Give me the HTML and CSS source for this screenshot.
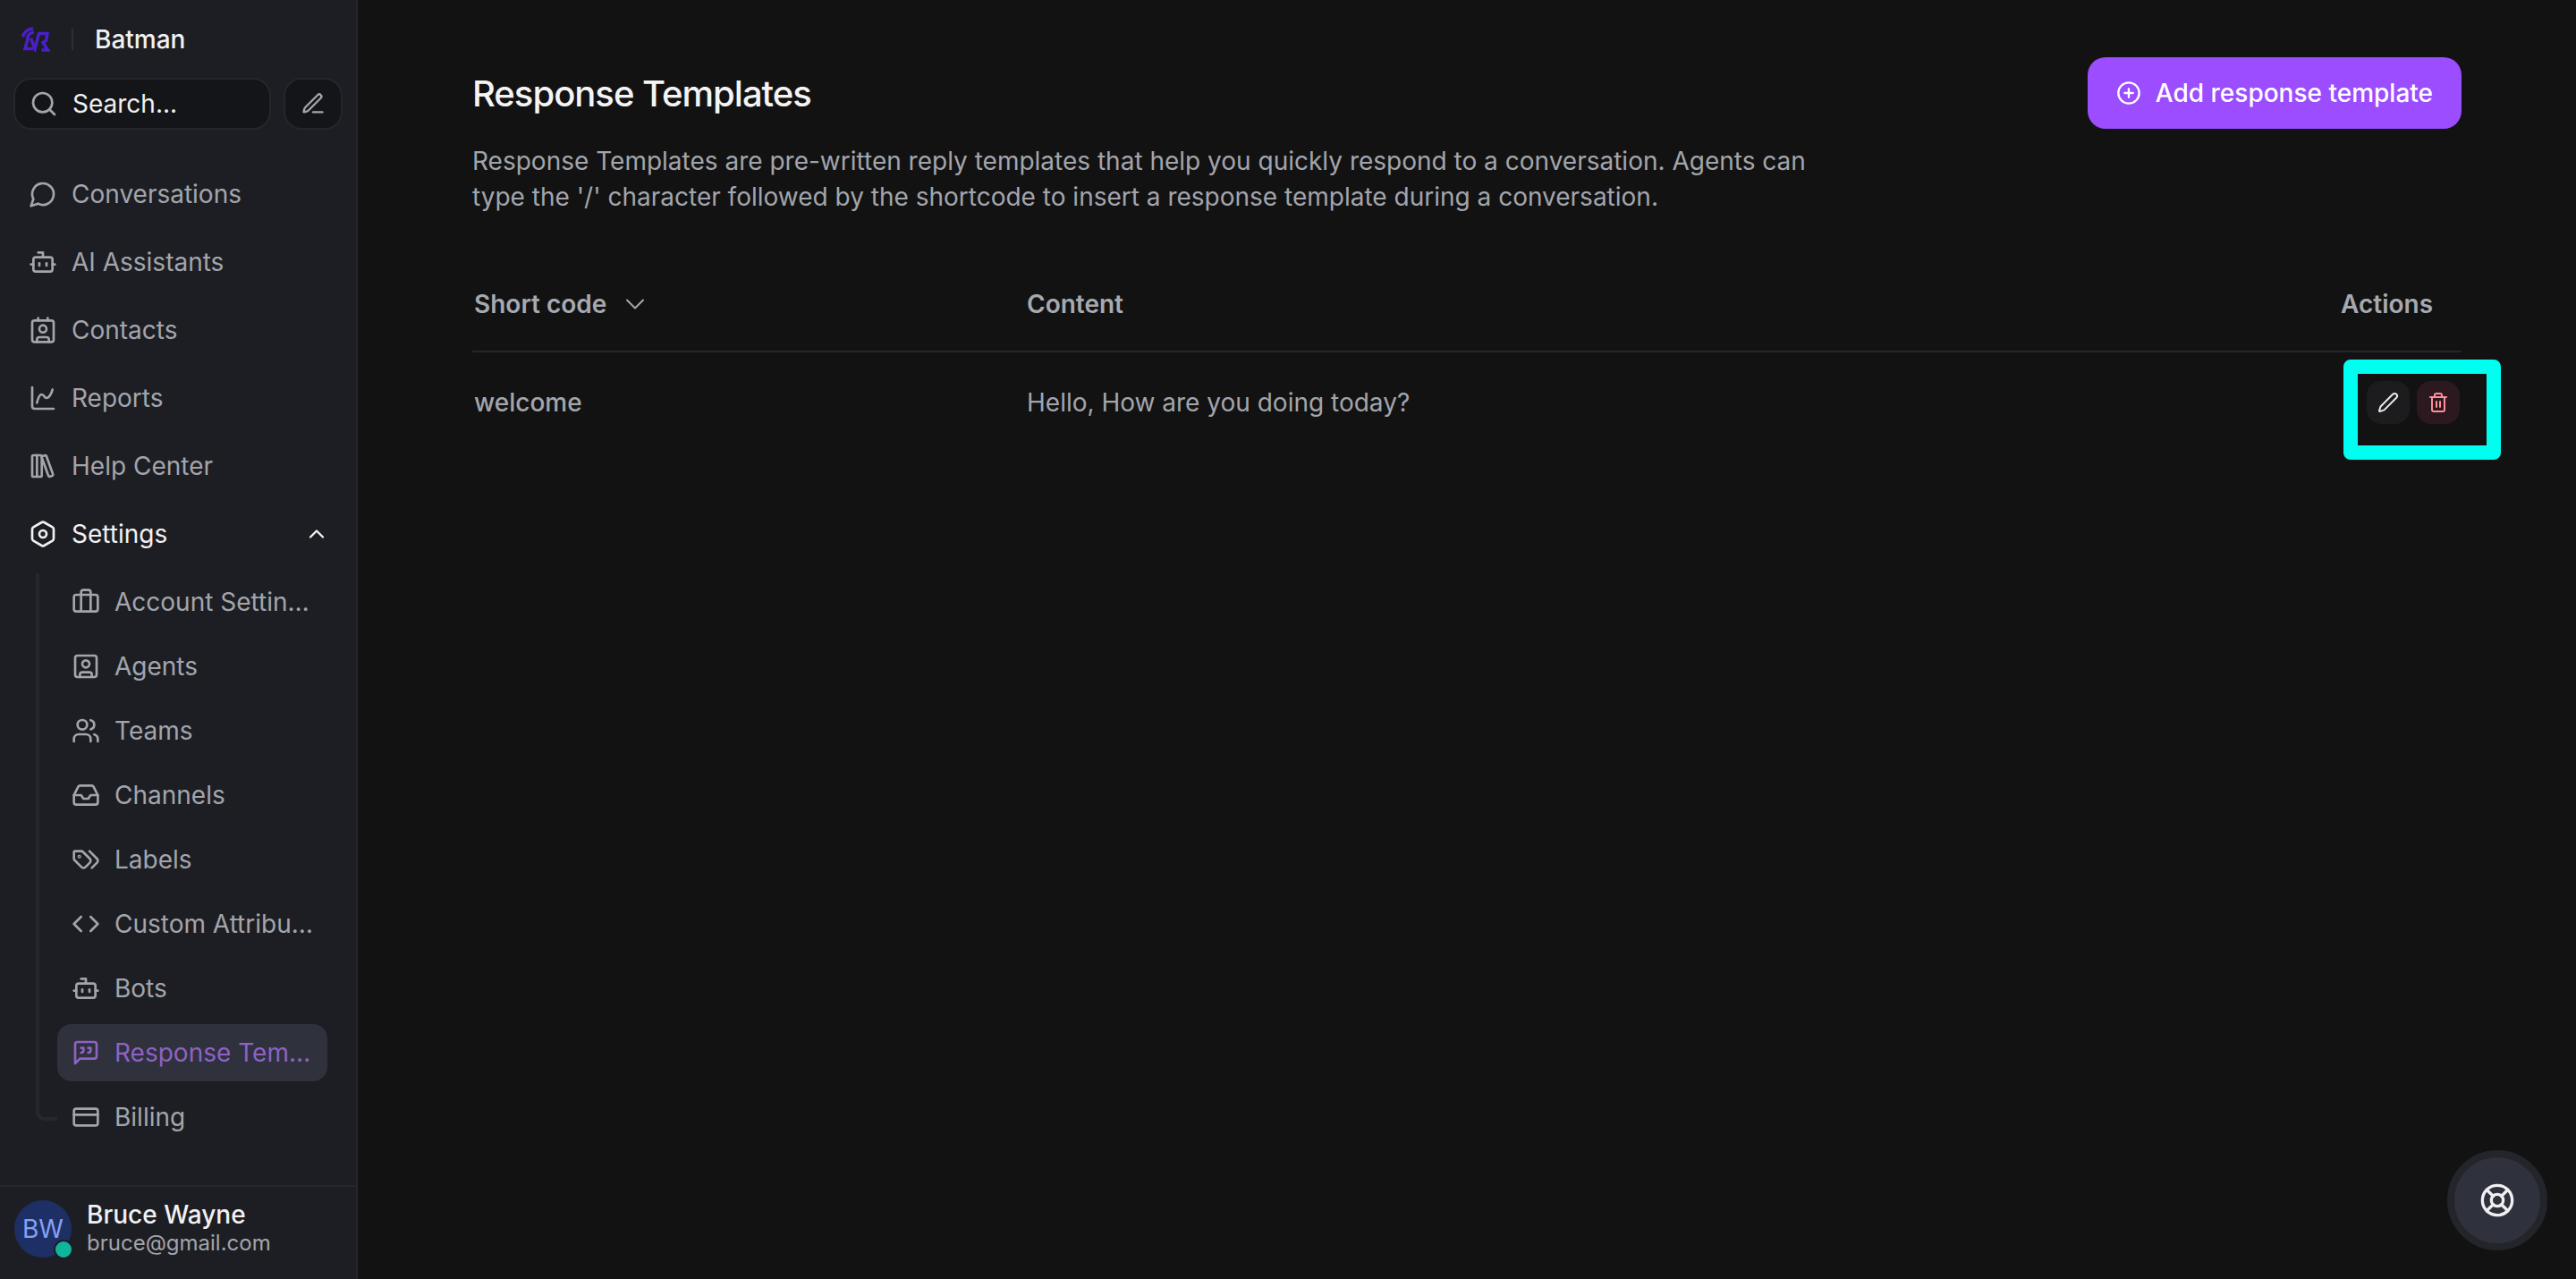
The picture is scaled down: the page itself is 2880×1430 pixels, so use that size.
FILE: index.html
```html
<!DOCTYPE html>
<html lang="en">
<head>
    <meta charset="UTF-8">
    <meta name="viewport" content="width=device-width, initial-scale=1.0">
    <title>Response Templates</title>
    <link rel="stylesheet" href="styles.css">
</head>
<body>
    <!-- Sidebar -->
    <aside class="sidebar">
        <div class="brand">
            <svg class="logo" viewBox="0 0 32 28">
                <path d="M1 11C3 6 7 2.500 13 2"/>
                <path d="M6 12C7.500 9 10 6.500 14 6"/>
                <path d="M7.700 11L4 24.500H13"/>
                <path d="M10.500 13L15 24.500L19.500 7.500H29L27.500 15.500L24 17.500L29.500 26H22.500"/>
            </svg>
            <span class="brand-divider"></span>
            <span class="brand-name">Batman</span>
        </div>
        <div class="search-row">
            <div class="search-box">
                <svg class="icon" viewBox="0 0 24 24"><circle cx="11" cy="11" r="8"/><path d="m21 21-4.300-4.300"/></svg>
                <span>Search...</span>
            </div>
            <div class="compose-button">
                <svg class="icon" viewBox="0 0 24 24"><path d="M12 20h9"/><path d="M16.376 3.622a1 1 0 0 1 3.002 3.002L7.368 18.635a2 2 0 0 1-.855.506l-2.872.838a.5.5 0 0 1-.62-.62l.838-2.872a2 2 0 0 1 .506-.854z"/></svg>
            </div>
        </div>

        <nav class="nav">
            <div class="nav-item">
                <svg class="icon" viewBox="0 0 24 24"><path d="M7.900 20A9 9 0 1 0 4 16.100L2 22Z"/></svg>
                <span>Conversations</span>
            </div>
            <div class="nav-item">
                <svg class="icon" viewBox="0 0 24 24"><path d="M12 8V4H8"/><rect width="16" height="12" x="4" y="8" rx="2"/><path d="M2 14h2"/><path d="M20 14h2"/><path d="M15 13v2"/><path d="M9 13v2"/></svg>
                <span>AI Assistants</span>
            </div>
            <div class="nav-item">
                <svg class="icon" viewBox="0 0 24 24"><path d="M16 2v2"/><path d="M7 22v-2a2 2 0 0 1 2-2h6a2 2 0 0 1 2 2v2"/><path d="M8 2v2"/><circle cx="12" cy="11" r="3"/><rect x="3" y="4" width="18" height="18" rx="2"/></svg>
                <span>Contacts</span>
            </div>
            <div class="nav-item">
                <svg class="icon" viewBox="0 0 24 24"><path d="M3 3v16a2 2 0 0 0 2 2h16"/><path d="M7 16c.5-2 1.500-7 4-7 2 0 2 3 4 3 2.500 0 4.500-5 5-7"/></svg>
                <span>Reports</span>
            </div>
            <div class="nav-item">
                <svg class="icon" viewBox="0 0 24 24"><rect width="8" height="18" x="3" y="3" rx="1"/><path d="M7 3v18"/><path d="M20.400 18.900c.2.5-.1 1.100-.6 1.300l-1.900.7c-.5.2-1.100-.1-1.300-.6L11.100 5.100c-.2-.5.1-1.100.6-1.300l1.900-.7c.5-.2 1.100.1 1.300.6Z"/></svg>
                <span>Help Center</span>
            </div>
            <div class="nav-item nav-item-open">
                <svg class="icon" viewBox="0 0 24 24"><path d="M21 16V8a2 2 0 0 0-1-1.730l-7-4a2 2 0 0 0-2 0l-7 4A2 2 0 0 0 3 8v8a2 2 0 0 0 1 1.730l7 4a2 2 0 0 0 2 0l7-4A2 2 0 0 0 21 16z"/><circle cx="12" cy="12" r="3"/></svg>
                <span>Settings</span>
                <svg class="icon-chevron" viewBox="0 0 24 24"><path d="m18 15-6-6-6 6"/></svg>
            </div>

            <div class="subnav">
                <div class="subnav-item">
                    <svg class="icon" viewBox="0 0 24 24"><path d="M16 20V4a2 2 0 0 0-2-2h-4a2 2 0 0 0-2 2v16"/><rect width="20" height="14" x="2" y="6" rx="2"/></svg>
                    <span class="subnav-label">Account Settings</span>
                </div>
                <div class="subnav-item">
                    <svg class="icon" viewBox="0 0 24 24"><rect width="18" height="18" x="3" y="3" rx="2"/><circle cx="12" cy="10" r="3"/><path d="M7 21v-2a2 2 0 0 1 2-2h6a2 2 0 0 1 2 2v2"/></svg>
                    <span class="subnav-label">Agents</span>
                </div>
                <div class="subnav-item">
                    <svg class="icon" viewBox="0 0 24 24"><path d="M16 21v-2a4 4 0 0 0-4-4H6a4 4 0 0 0-4 4v2"/><circle cx="9" cy="7" r="4"/><path d="M22 21v-2a4 4 0 0 0-3-3.870"/><path d="M16 3.130a4 4 0 0 1 0 7.750"/></svg>
                    <span class="subnav-label">Teams</span>
                </div>
                <div class="subnav-item">
                    <svg class="icon" viewBox="0 0 24 24"><path d="M22 12h-6l-2 3h-4l-2-3H2"/><path d="M5.450 5.110 2 12v6a2 2 0 0 0 2 2h16a2 2 0 0 0 2-2v-6l-3.450-6.890A2 2 0 0 0 16.760 4H7.240a2 2 0 0 0-1.790 1.110z"/></svg>
                    <span class="subnav-label">Channels</span>
                </div>
                <div class="subnav-item">
                    <svg class="icon" viewBox="0 0 24 24"><path d="m15 5 6.300 6.300a2.400 2.400 0 0 1 0 3.400L17 19"/><path d="M9.586 5.586A2 2 0 0 0 8.172 5H3a1 1 0 0 0-1 1v5.172a2 2 0 0 0 .586 1.414L8.290 18.290a2.426 2.426 0 0 0 3.420 0l3.580-3.580a2.426 2.426 0 0 0 0-3.420z"/><circle cx="6.500" cy="9.500" r=".5"/></svg>
                    <span class="subnav-label">Labels</span>
                </div>
                <div class="subnav-item">
                    <svg class="icon" viewBox="0 0 24 24"><path d="m16 18 6-6-6-6"/><path d="m8 6-6 6 6 6"/></svg>
                    <span class="subnav-label">Custom Attributes</span>
                </div>
                <div class="subnav-item">
                    <svg class="icon" viewBox="0 0 24 24"><path d="M12 8V4H8"/><rect width="16" height="12" x="4" y="8" rx="2"/><path d="M2 14h2"/><path d="M20 14h2"/><path d="M15 13v2"/><path d="M9 13v2"/></svg>
                    <span class="subnav-label">Bots</span>
                </div>
                <div class="subnav-item subnav-item-active">
                    <svg class="icon" viewBox="0 0 24 24"><path d="M21 15a2 2 0 0 1-2 2H7l-4 4V5a2 2 0 0 1 2-2h14a2 2 0 0 1 2 2z"/><path d="M8 12a2 2 0 0 0 2-2V8H8"/><path d="M14 12a2 2 0 0 0 2-2V8h-2"/></svg>
                    <span class="subnav-label">Response Templates</span>
                </div>
                <div class="subnav-item">
                    <svg class="icon" viewBox="0 0 24 24"><rect width="20" height="14" x="2" y="5" rx="2"/><path d="M2 10h20"/></svg>
                    <span class="subnav-label">Billing</span>
                </div>
            </div>
        </nav>

        <div class="profile">
            <div class="avatar">BW<span class="status-dot"></span></div>
            <div class="profile-text">
                <div class="profile-name">Bruce Wayne</div>
                <div class="profile-email">bruce@gmail.com</div>
            </div>
        </div>
    </aside>

    <!-- Main -->
    <main class="main">
        <div class="page-header">
            <h1>Response Templates</h1>
            <div class="add-button">
                <svg class="icon" viewBox="0 0 24 24"><circle cx="12" cy="12" r="10"/><path d="M8 12h8"/><path d="M12 8v8"/></svg>
                <span>Add response template</span>
            </div>
        </div>
        <p class="page-description">Response Templates are pre-written reply templates that help you quickly respond to a conversation. Agents can type the '/' character followed by the shortcode to insert a response template during a conversation.</p>

        <table class="templates">
            <thead>
                <tr>
                    <th class="col-code">
                        <span class="sort-head">Short code
                            <svg class="icon-sort" viewBox="0 0 24 24"><path d="m6 9 6 6 6-6"/></svg>
                        </span>
                    </th>
                    <th>Content</th>
                    <th class="col-actions">Actions</th>
                </tr>
            </thead>
            <tbody>
                <tr>
                    <td class="cell-code">welcome</td>
                    <td>Hello, How are you doing today?</td>
                    <td class="cell-actions">
                        <div class="actions">
                            <div class="action-button">
                                <svg class="icon-small" viewBox="0 0 24 24"><path d="M21.174 6.812a1 1 0 0 0-3.986-3.987L3.842 16.174a2 2 0 0 0-.5.83l-1.321 4.352a.5.5 0 0 0 .623.622l4.353-1.320a2 2 0 0 0 .83-.497z"/></svg>
                            </div>
                            <div class="action-button action-delete">
                                <svg class="icon-small" viewBox="0 0 24 24"><path d="M3 6h18"/><path d="M19 6v14c0 1-1 2-2 2H7c-1 0-2-1-2-2V6"/><path d="M8 6V4c0-1 1-2 2-2h4c1 0 2 1 2 2v2"/><path d="M10 11v6"/><path d="M14 11v6"/></svg>
                            </div>
                            <div class="highlight-box"></div>
                        </div>
                    </td>
                </tr>
            </tbody>
        </table>

        <div class="help-button">
            <svg class="icon-help" viewBox="0 0 24 24"><circle cx="12" cy="12" r="10"/><path d="m4.930 4.930 4.240 4.240"/><path d="m14.830 9.170 4.240-4.240"/><path d="m14.830 14.830 4.240 4.240"/><path d="m9.170 14.830-4.240 4.240"/><circle cx="12" cy="12" r="4"/></svg>
        </div>
    </main>
</body>
</html>
```

FILE: styles.css
```css
* {
    box-sizing: border-box;
}

body {
    margin: 0;
    height: 100vh;
    display: flex;
    overflow: hidden;
    font-family: Inter, "Liberation Sans", sans-serif;
    font-size: 28px;
    color: #a3a5ac;
    background-color: #121212;
}

svg {
    flex-shrink: 0;
    fill: none;
    stroke: currentColor;
    stroke-width: 2;
    stroke-linecap: round;
    stroke-linejoin: round;
}

.icon {
    width: 32px;
    height: 32px;
}

/* Sidebar */
.sidebar {
    width: 400px;
    flex-shrink: 0;
    display: flex;
    flex-direction: column;
    background-color: #1d1e23;
    border-right: 2px solid #26272c;
}

.brand {
    height: 87px;
    display: flex;
    align-items: center;
    padding-left: 24px;
}

.logo {
    width: 32px;
    height: 28px;
    stroke: #4a1fc9;
    stroke-width: 3.500;
    stroke-linecap: butt;
    stroke-linejoin: miter;
}

.brand-divider {
    width: 2px;
    height: 24px;
    margin-left: 24px;
    margin-right: 24px;
    background-color: #2f3035;
}

.brand-name {
    font-weight: 500;
    color: #f1f1f3;
}

.search-row {
    display: flex;
    gap: 14px;
    padding: 0 15px;
}

.search-box {
    flex: 1;
    height: 58px;
    display: flex;
    align-items: center;
    gap: 16px;
    padding-left: 16px;
    color: #f0f0f2;
    background-color: #141519;
    border: 2px solid #25262b;
    border-radius: 20px;
}

.search-box .icon {
    color: #a3a5ac;
}

.compose-button {
    width: 66px;
    height: 58px;
    display: flex;
    justify-content: center;
    align-items: center;
    background-color: #141519;
    border: 2px solid #25262b;
    border-radius: 20px;
}

.compose-button .icon {
    width: 28px;
    height: 28px;
}

.nav {
    flex: 1;
    display: flex;
    flex-direction: column;
    gap: 8px;
    padding: 38px 16px 0;
}

.nav-item {
    height: 68px;
    display: flex;
    align-items: center;
    gap: 16px;
    padding: 0 16px;
}

.nav-item-open {
    color: #f1f1f3;
}

.icon-chevron {
    width: 28px;
    height: 28px;
    margin-left: auto;
    margin-right: -2px;
}

.subnav {
    position: relative;
    display: flex;
    flex-direction: column;
    gap: 8px;
    margin-top: 2px;
    padding-left: 48px;
    padding-right: 16px;
}

/* tree line on the left of the settings children */
.subnav::before {
    content: "";
    position: absolute;
    left: 24px;
    top: 0;
    bottom: 28px;
    width: 20px;
    border-left: 4px solid #27282d;
    border-bottom: 4px solid #27282d;
    border-bottom-left-radius: 10px;
}

.subnav-item {
    height: 64px;
    display: flex;
    align-items: center;
    gap: 16px;
    padding: 0 14px 0 16px;
    border-radius: 16px;
}

.subnav-label {
    min-width: 0;
    overflow: hidden;
    white-space: nowrap;
    text-overflow: ellipsis;
}

.subnav-item-active {
    color: #8f62c4;
    background-color: #2f313d;
}

.profile {
    height: 105px;
    display: flex;
    gap: 17px;
    padding: 15px 16px 0;
    border-top: 2px solid #26272c;
}

.avatar {
    position: relative;
    width: 64px;
    height: 64px;
    display: flex;
    justify-content: center;
    align-items: center;
    color: #86a1f3;
    background-color: #1e2f66;
    border-radius: 50%;
}

.status-dot {
    position: absolute;
    right: -2px;
    bottom: -2px;
    width: 22px;
    height: 22px;
    background-color: #10b69b;
    border: 2px solid #1d1e23;
    border-radius: 50%;
}

.profile-text {
    margin-top: -2px;
}

.profile-name {
    font-weight: 500;
    line-height: 36px;
    color: #f1f1f3;
}

.profile-email {
    font-size: 24px;
    line-height: 28px;
}

/* Main */
.main {
    flex: 1;
    position: relative;
    padding: 64px 128px 0;
}

.page-header {
    display: flex;
    justify-content: space-between;
    align-items: center;
}

h1 {
    margin: 0;
    font-size: 40px;
    font-weight: 500;
    letter-spacing: -1px;
    color: #f4f4f5;
}

.add-button {
    height: 80px;
    display: flex;
    align-items: center;
    gap: 16px;
    padding: 0 32px;
    font-weight: 500;
    color: #ffffff;
    background-color: #9b4dff;
    border-radius: 20px;
}

.add-button .icon {
    width: 28px;
    height: 28px;
}

.page-description {
    width: 1536px;
    margin: 16px 0 48px;
    line-height: 40px;
}

.templates {
    width: 100%;
    table-layout: fixed;
    border-collapse: collapse;
}

th {
    height: 105px;
    padding: 0 0 0 2px;
    text-align: left;
    font-weight: 600;
    color: #a7a9b0;
    border-bottom: 2px solid #26272c;
}

td {
    height: 112px;
    padding: 0 0 0 2px;
}

.col-code {
    width: 618px;
}

.col-actions {
    width: 135px;
    padding-left: 0;
}

.sort-head {
    display: flex;
    align-items: center;
    gap: 14px;
}

.icon-sort {
    width: 36px;
    height: 36px;
    stroke-width: 1.300;
}

.cell-code {
    font-weight: 500;
}

.cell-actions {
    padding: 0 0 0 29px;
}

.actions {
    position: relative;
    display: flex;
    gap: 8px;
}

.action-button {
    width: 48px;
    height: 48px;
    display: flex;
    justify-content: center;
    align-items: center;
    color: #e8e8ea;
    background-color: #1c1c1f;
    border-radius: 16px;
}

.action-delete {
    color: #ff8f9c;
    background-color: #2c191f;
}

.icon-small {
    width: 24px;
    height: 24px;
}

/* cyan annotation drawn over the actions */
.highlight-box {
    position: absolute;
    left: -26px;
    top: -24px;
    width: 176px;
    height: 112px;
    border: 16px solid #00fff0;
    border-radius: 8px;
}

.help-button {
    position: absolute;
    right: 32px;
    bottom: 32px;
    width: 112px;
    height: 112px;
    display: flex;
    justify-content: center;
    align-items: center;
    color: #f0f0f2;
    background-color: #2f313d;
    border: 8px solid #24252a;
    border-radius: 50%;
}

.icon-help {
    width: 40px;
    height: 40px;
}
```
